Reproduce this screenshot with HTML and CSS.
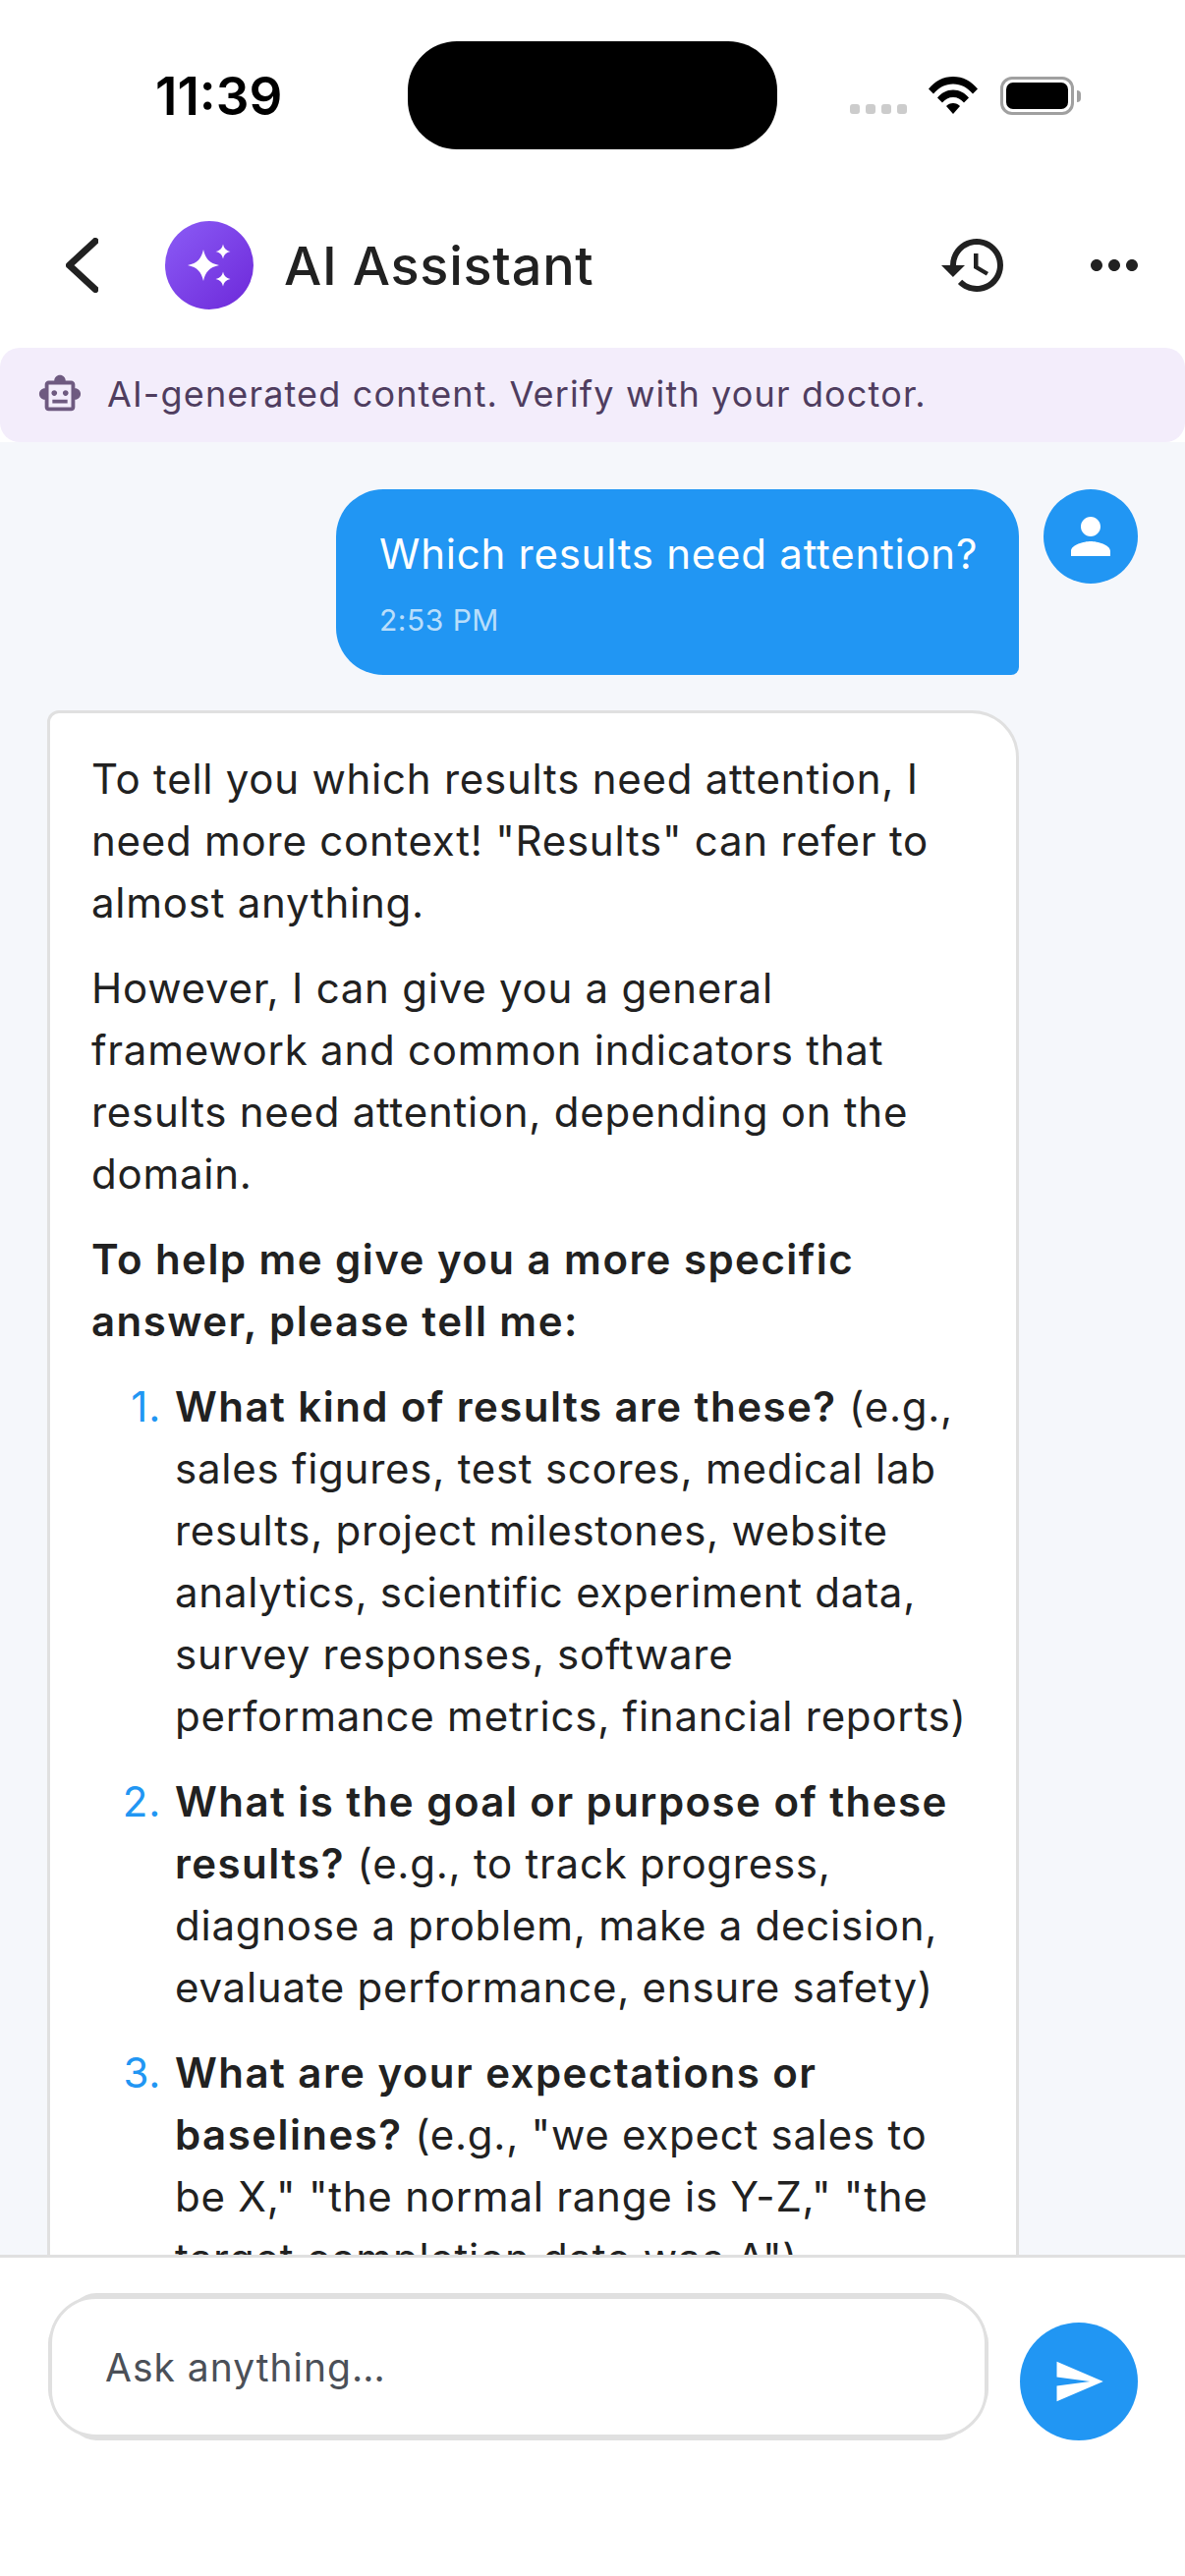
FILE: index.html
```html
<!DOCTYPE html>
<html lang="en">
<head>
	<meta charset="UTF-8">
	<title>AI Assistant</title>
	<link rel="stylesheet" href="styles.css">
</head>
<body>
	<div class="page">
		<div class="status">
			<span class="time">11:39</span>
			<div class="island"></div>
			<div class="status-right">
				<div class="signal"><i></i><i></i><i></i><i></i></div>
				<svg class="wifi" viewBox="0 0 50 38"><path d="M0 12.5C6.5 4.5 15 0 25 0s18.500 4.500 25 12.500l-5 5C39.500 11 33 7.500 25 7.500S10.500 11 5 17.500z"/><path d="M9 21.500C13 16.500 18.500 13.500 25 13.500s12 3 16 8l-5 5C33 23 29.500 21 25 21s-8 2-11 5.500z"/><path d="M18 30c1.800-2 4.200-3 7-3s5.200 1 7 3L25 38z"/></svg>
				<div class="battery"><div class="battery-body"><div class="battery-fill"></div></div><div class="battery-nub"></div></div>
			</div>
		</div>
		<header class="header">
			<svg class="back" viewBox="0 0 33 56"><path d="M30 3.500L3.500 28 30 52.500"/></svg>
			<div class="logo">
				<svg viewBox="0 0 90 90"><path d="M39 29C41 38 45 43 55 45 45 47 41 52 39 61 37 52 33 47 23 45 33 43 37 38 39 29z"/><path d="M59 23.500C60 28 62 30 66.500 31 62 32 60 34 59 38.500 58 34 56 32 51.500 31 56 30 58 28 59 23.500z"/><path d="M59 51.500C60 56 62 58 66.500 59 62 60 60 62 59 66.500 58 62 56 60 51.500 59 56 58 58 56 59 51.500z"/></svg>
			</div>
			<h1 class="title">AI Assistant</h1>
			<svg class="head-icon" viewBox="0 0 24 24"><path d="M13 3c-4.970 0-9 4.030-9 9H1l3.890 3.890.070.140L9 12H6c0-3.870 3.130-7 7-7s7 3.130 7 7-3.130 7-7 7c-1.930 0-3.680-.790-4.940-2.060l-1.420 1.420C8.270 19.990 10.510 21 13 21c4.970 0 9-4.030 9-9s-4.030-9-9-9zm-1 5v5l4.280 2.540.720-1.210-3.500-2.080V8H12z"/></svg>
			<svg class="head-icon" viewBox="0 0 24 24"><path d="M6 10c-1.100 0-2 .9-2 2s.9 2 2 2 2-.9 2-2-.9-2-2-2zm12 0c-1.100 0-2 .9-2 2s.9 2 2 2 2-.9 2-2-.9-2-2-2zm-6 0c-1.100 0-2 .9-2 2s.9 2 2 2 2-.9 2-2-.9-2-2-2z"/></svg>
		</header>
		<div class="notice">
			<svg viewBox="0 0 24 24"><path d="M20 9V7c0-1.100-.9-2-2-2h-3c0-1.660-1.340-3-3-3S9 3.340 9 5H6c-1.100 0-2 .9-2 2v2c-1.660 0-3 1.340-3 3s1.340 3 3 3v4c0 1.100.9 2 2 2h12c1.100 0 2-.9 2-2v-4c1.660 0 3-1.340 3-3s-1.340-3-3-3zm-2 10H6V7h12v12zm-9-6c-.83 0-1.500-.67-1.500-1.500S8.170 10 9 10s1.500.67 1.500 1.500S9.830 13 9 13zm7.500-1.500c0 .83-.67 1.500-1.500 1.500s-1.500-.67-1.500-1.500.67-1.500 1.500-1.500 1.500.67 1.500 1.500zM8 15h8v2H8v-2z"/></svg>
			<span>AI-generated content. Verify with your doctor.</span>
		</div>
		<main class="chat">
			<div class="user-row">
				<div class="bubble">
					<p class="bubble-text">Which results need attention?</p>
					<p class="bubble-time">2:53 PM</p>
				</div>
				<div class="user-avatar">
					<svg viewBox="0 0 24 24"><path d="M12 12c2.210 0 4-1.790 4-4s-1.790-4-4-4-4 1.790-4 4 1.790 4 4 4zm0 2c-2.670 0-8 1.340-8 4v2h16v-2c0-2.660-5.330-4-8-4z"/></svg>
				</div>
			</div>
			<div class="answer">
				<p>To tell you which results need attention, I need more context! "Results" can refer to almost anything.</p>
				<p>However, I can give you a general framework and common indicators that results need attention, depending on the domain.</p>
				<p><b>To help me give you a more specific answer, please tell me:</b></p>
				<ol class="steps">
					<li><span class="num">1.</span><div><b>What kind of results are these?</b> (e.g., sales figures, test scores, medical lab results, project milestones, website analytics, scientific experiment data, survey responses, software performance metrics, financial reports)</div></li>
					<li><span class="num">2.</span><div><b>What is the goal or purpose of these results?</b> (e.g., to track progress, diagnose a problem, make a decision, evaluate performance, ensure safety)</div></li>
					<li><span class="num">3.</span><div><b>What are your expectations or baselines?</b> (e.g., "we expect sales to be X," "the normal range is Y-Z," "the target completion date was A")</div></li>
				</ol>
			</div>
		</main>
		<footer class="composer">
			<div class="input"><span>Ask anything…</span></div>
			<div class="send">
				<svg viewBox="0 0 24 24"><path d="M2.010 21L23 12 2.010 3 2 10l15 2-15 2z"/></svg>
			</div>
		</footer>
	</div>
</body>
</html>
```

FILE: styles.css
```css
*{
	margin: 0;
	padding: 0;
	box-sizing: border-box;
}
body{
	background: #fff;
	font-family: "Inter", "Liberation Sans", sans-serif;
	color: #212121;
}
.page{
	width: 1206px;
	height: 2622px;
	display: flex;
	flex-direction: column;
	overflow: hidden;
	background: #fff;
}
.status{
	height: 200px;
	flex: none;
	display: flex;
	align-items: flex-start;
	padding-top: 42px;
}
.time{
	width: 415px;
	padding: 30px 0 0 158px;
	font-size: 53px;
	line-height: 52px;
	font-weight: 600;
	color: #000;
}
.island{
	width: 376px;
	height: 110px;
	border-radius: 50px;
	background: #000;
}
.status-right{
	display: flex;
	align-items: flex-start;
	padding: 36px 0 0 74px;
}
.signal{
	display: flex;
	gap: 6px;
	margin: 28px 22px 0 0;
}
.signal i{
	width: 10px;
	height: 10px;
	border-radius: 3px;
	background: #ccc;
}
.wifi{
	width: 50px;
	height: 38px;
	margin-right: 23px;
}
.battery{
	display: flex;
	align-items: center;
}
.battery-body{
	width: 75px;
	height: 39px;
	border: 3px solid #a0a0a0;
	border-radius: 12px;
	padding: 3px;
}
.battery-fill{
	height: 100%;
	border-radius: 7px;
	background: #000;
}
.battery-nub{
	width: 4px;
	height: 12px;
	margin-left: 3px;
	border-radius: 0 4px 4px 0;
	background: #a0a0a0;
}
.header{
	height: 154px;
	flex: none;
	display: flex;
	align-items: center;
	padding: 0 36px 14px 67px;
}
.back{
	width: 33px;
	height: 56px;
	fill: none;
	stroke: #212121;
	stroke-width: 7;
	stroke-linecap: round;
	stroke-linejoin: round;
	margin-right: 68px;
}
.logo{
	width: 90px;
	height: 90px;
	border-radius: 50%;
	background: linear-gradient(135deg, #8b5cf6, #6d28d9);
	margin-right: 31px;
}
.logo svg{
	display: block;
	fill: #fff;
}
.title{
	flex: 1;
	font-size: 54px;
	font-weight: 500;
	letter-spacing: 0.750px;
}
.head-icon{
	width: 72px;
	height: 72px;
	fill: #212121;
}
.head-icon + .head-icon{
	margin-left: 71px;
}
.notice{
	height: 96px;
	flex: none;
	display: flex;
	align-items: center;
	gap: 25px;
	padding-left: 38px;
	padding-bottom: 2px;
	border-radius: 20px;
	background: #f3edfb;
	color: #4f3d5f;
	font-size: 36px;
	letter-spacing: 1.150px;
}
.notice svg{
	width: 46px;
	height: 46px;
	fill: #6e5a80;
}
.chat{
	flex: 1;
	min-height: 0;
	overflow: hidden;
	background: #f5f7fb;
	padding: 48px 48px 0;
}
.user-row{
	display: flex;
	justify-content: flex-end;
	align-items: flex-start;
	gap: 25px;
}
.bubble{
	width: 695px;
	height: 189px;
	padding: 40px 44px 0;
	border-radius: 48px 48px 8px 48px;
	background: #2196f3;
	color: #fff;
}
.bubble-text{
	font-size: 42px;
	line-height: 52px;
	letter-spacing: 0.750px;
	white-space: nowrap;
}
.bubble-time{
	margin-top: 23px;
	font-size: 30px;
	line-height: 36px;
	letter-spacing: 0.500px;
	color: rgba(255, 255, 255, 0.7);
}
.user-avatar{
	width: 96px;
	height: 96px;
	flex: none;
	display: flex;
	align-items: center;
	justify-content: center;
	border-radius: 50%;
	background: #2196f3;
}
.user-avatar svg{
	width: 60px;
	height: 60px;
	fill: #fff;
}
.answer{
	width: 989px;
	margin-top: 36px;
	padding: 35px 42px 0;
	border: 3px solid #e0e0e0;
	border-radius: 12px 48px 0 0;
	background: #fff;
	font-size: 42px;
	line-height: 63px;
	letter-spacing: 0.750px;
}
.answer p{
	margin-bottom: 24px;
}
.answer b{
	font-weight: 600;
	letter-spacing: 1.450px;
}
.steps{
	list-style: none;
}
.steps li{
	display: flex;
	margin-bottom: 24px;
}
.num{
	width: 85px;
	flex: none;
	padding-right: 14px;
	text-align: right;
	color: #2196f3;
}
.composer{
	height: 327px;
	flex: none;
	display: flex;
	align-items: flex-start;
	gap: 33px;
	padding: 36px 48px 0 50px;
	border-top: 3px solid #e0e0e0;
	background: #fff;
}
.input{
	width: 955px;
	height: 144px;
	display: flex;
	align-items: center;
	margin-top: 3px;
	padding: 0 0 0 54px;
	border: 3px solid #e0e0e0;
	border-radius: 48px;
	box-shadow: 0 -23px 0 -20px #e0e0e0, 0 23px 0 -20px #e0e0e0, -21px 0 0 -20px #e0e0e0, 21px 0 0 -20px #e0e0e0;
	background: #fff;
	color: #4b5058;
	font-size: 39px;
	letter-spacing: 1px;
}
.send{
	width: 120px;
	height: 120px;
	flex: none;
	display: flex;
	align-items: center;
	justify-content: center;
	margin-top: 30px;
	border-radius: 50%;
	background: #2196f3;
}
.send svg{
	width: 54px;
	height: 54px;
	fill: #fff;
}
```
